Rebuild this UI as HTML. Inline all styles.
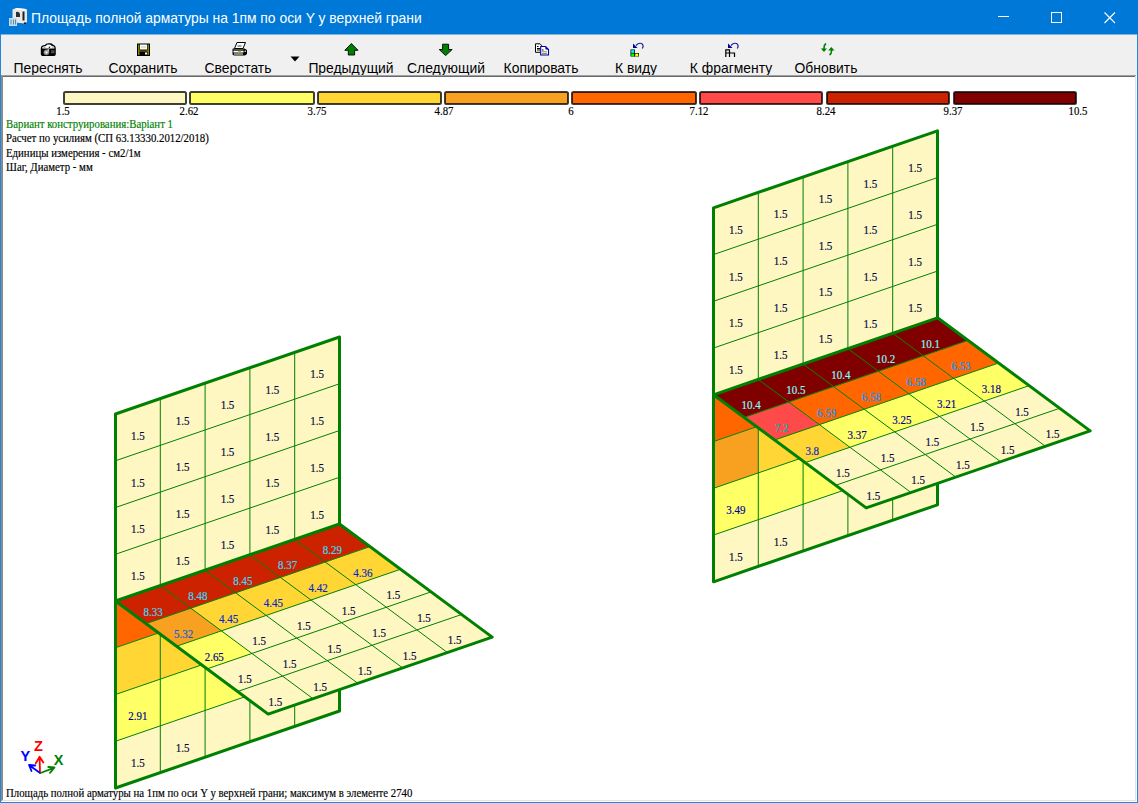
<!DOCTYPE html>
<html><head><meta charset="utf-8"><style>
html,body{margin:0;padding:0;width:1138px;height:803px;overflow:hidden;background:#fff}
body{position:relative;font-family:"Liberation Sans",sans-serif}
#title{position:absolute;left:0;top:0;width:1138px;height:34px;background:#0078D7}
#ttext{position:absolute;left:31px;top:9.5px;color:#fff;font-size:13.88px;white-space:nowrap}
#tb{position:absolute;left:1px;top:34px;width:1136px;height:41px;background:#F0F0F0;border-top:1px solid #80B4E0;box-sizing:border-box}
.lbl{position:absolute;top:24.5px;font-size:13.9px;color:#000;white-space:nowrap}
#client{position:absolute;left:1px;top:75px;width:1136px;height:727px}
#bl{position:absolute;left:0;top:34px;width:1px;height:769px;background:#1E88DF}
#br{position:absolute;left:1137px;top:34px;width:1px;height:769px;background:#1E88DF}
#bb{position:absolute;left:0;top:802px;width:1138px;height:1px;background:#1E88DF}
svg{position:absolute;left:0;top:0}
.serif text{font-family:"Liberation Serif",serif;font-size:10.8px;stroke:currentColor;stroke-width:0.15px}
.serif g.lab text{font-size:11px}
</style></head><body>
<div id="title"><div id="ttext">Площадь полной арматуры на 1пм по оси Y у верхней грани</div></div>
<div id="tb">
<div class="lbl" style="left:47px;transform:translateX(-50%)">Переснять</div>
<div class="lbl" style="left:142px;transform:translateX(-50%)">Сохранить</div>
<div class="lbl" style="left:237px;transform:translateX(-50%)">Сверстать</div>
<div class="lbl" style="left:350px;transform:translateX(-50%)">Предыдущий</div>
<div class="lbl" style="left:445px;transform:translateX(-50%)">Следующий</div>
<div class="lbl" style="left:540px;transform:translateX(-50%)">Копировать</div>
<div class="lbl" style="left:635px;transform:translateX(-50%)">К виду</div>
<div class="lbl" style="left:730px;transform:translateX(-50%)">К фрагменту</div>
<div class="lbl" style="left:825px;transform:translateX(-50%)">Обновить</div><svg width="1136" height="41" style="position:absolute;left:-1px;top:-35px;overflow:visible">
<g transform="translate(0,0)">
<!-- camera -->
<path d="M40.8 48.5 Q40.8 46.2 42.5 45.6 L44.8 45 Q46 43.3 48.3 43.3 L50.5 43.3 Q52 43.4 52.8 44.4 L54.3 45.2 Q55.8 46 55.8 48.5 L55.8 54.2 Q55.8 55.9 54 55.9 L42.6 55.9 Q40.8 55.9 40.8 54.2 Z" fill="#000"/>
<path d="M42.2 48.6 L54.4 48.6 L54.4 47.6 Q54 46.3 52.8 46.1 L51.5 45.7 Q50.8 44.4 49 44.4 L47.5 44.5 Q46.3 45 45.7 46 L43.5 46.5 Q42.2 47 42.2 47.8 Z" fill="#fff"/>
<rect x="48.8" y="46.6" width="1.3" height="1.3" fill="#000"/>
<rect x="43.5" y="46.8" width="2" height="0.9" fill="#808080"/>
<rect x="51.8" y="46.6" width="2" height="0.9" fill="#808080"/>
<circle cx="46.4" cy="52.3" r="2.9" fill="#7a7a7a"/>
<circle cx="46.4" cy="52.3" r="1.9" fill="#b0b0b0"/>
<circle cx="46.4" cy="52.3" r="0.9" fill="#fff"/>
<rect x="47.5" y="49.2" width="1.6" height="2.2" fill="#d0d0d0"/>
<rect x="51" y="50.6" width="3.6" height="0.9" fill="#909090"/>
<rect x="51" y="52.3" width="3.6" height="0.9" fill="#707070"/>
<!-- floppy -->
<rect x="137" y="43.5" width="13" height="12.5" fill="#000"/>
<rect x="138" y="44.5" width="1.5" height="10.5" fill="#808000"/>
<rect x="147.5" y="44.5" width="1.5" height="10.5" fill="#808000"/>
<rect x="138" y="50.5" width="11" height="1" fill="#808000"/>
<rect x="140" y="44.5" width="7" height="5" fill="#fff"/>
<rect x="141" y="46.5" width="5" height="1" fill="#c0c0c0"/>
<rect x="145" y="52.5" width="2" height="2" fill="#fff"/>
<!-- printer -->
<path d="M237 42.5 L245.5 42.5 L243 48.5 L234.5 48.5 Z" fill="#fff" stroke="#000" stroke-width="1"/>
<rect x="237.5" y="45.5" width="4" height="1" fill="#404040"/>
<path d="M233 48.5 L244.5 48.5 L247 50 L247 54 L245 55.5 L234 55.5 L232.5 54.5 L232.5 49 Z" fill="#000"/>
<rect x="233.5" y="49.5" width="10" height="1" fill="#a0a0a0"/>
<rect x="233.5" y="51" width="10" height="1.5" fill="#fff"/>
<rect x="238" y="51" width="3" height="1.5" fill="#c0c000"/>
<rect x="234" y="53" width="9" height="2" fill="#808080"/>
<rect x="244.5" y="50.5" width="1.5" height="1.5" fill="#c0c0c0"/>
<!-- dropdown -->
<path d="M290.5 56.5 L299.5 56.5 L295 61.5 Z" fill="#000"/>
<!-- up arrow -->
<path d="M351.4 43.5 L358 50.3 L354.6 50.3 L354.6 55 L348.3 55 L348.3 50.3 L344.8 50.3 Z" fill="#008000" stroke="#000" stroke-width="0.9" stroke-linejoin="miter"/>
<!-- down arrow -->
<path d="M442.6 44.2 L448.6 44.2 L448.6 49.5 L452.2 49.5 L445.6 55.6 L439.2 49.5 L442.6 49.5 Z" fill="#008000" stroke="#000" stroke-width="0.9"/>
<!-- copy -->
<path d="M535.5 43.8 L540 43.8 L541.5 45.3 L541.5 52.3 L535.5 52.3 Z" fill="#fff" stroke="#000" stroke-width="1"/>
<rect x="537" y="46" width="1.5" height="1" fill="#000"/><rect x="537" y="48" width="3" height="1" fill="#000"/><rect x="537" y="49.5" width="3" height="1" fill="#000"/>
<path d="M540.7 46.5 L545.5 46.5 L548.5 49.5 L548.5 55 L540.7 55 Z" fill="#fff" stroke="#0000A0" stroke-width="1.1"/>
<path d="M545.5 46.5 L548.5 49.5 L545.5 49.5 Z" fill="#0000A0"/>
<rect x="542" y="49.5" width="1.5" height="1" fill="#000"/><rect x="542" y="51.3" width="5" height="1" fill="#909060"/><rect x="542" y="53" width="5" height="1" fill="#909060"/>
<!-- K vidu -->
<path d="M633 43.5 L633 48 L637.5 48 Z" fill="#000090"/>
<path d="M636 45.5 Q638.5 42.5 641.5 43.5 Q643.5 44.5 643 47 L642.3 48.5" fill="none" stroke="#2020A0" stroke-width="1.2"/>
<rect x="630.5" y="49.5" width="4.5" height="7" fill="#000"/>
<rect x="631.2" y="50.2" width="3.1" height="2.6" fill="#00FFFF"/>
<rect x="631.2" y="53.5" width="3.1" height="2.8" fill="#00FF00"/>
<rect x="634.5" y="53" width="4.5" height="3.5" fill="#000"/>
<rect x="635.2" y="53.6" width="3.1" height="2.7" fill="#FFFF00"/>
<!-- K fragmentu -->
<path d="M728 43.5 L728 48 L732.5 48 Z" fill="#000090"/>
<path d="M731 45.5 Q733.5 42.5 736.5 43.5 Q738.5 44.5 738 47 L737.3 48.5" fill="none" stroke="#2020A0" stroke-width="1.2"/>
<path d="M725.8 57 L725.8 49.8 L729.5 49.8 L729.5 57 M725.8 53 L734.5 53 L734.5 57" fill="none" stroke="#000" stroke-width="1.2"/>
<!-- refresh -->
<path d="M826 43.5 Q824 45 824 48 L824 49" fill="none" stroke="#008000" stroke-width="1.6"/>
<path d="M820.8 48.5 L827 48.5 L824 52 Z" fill="#008000"/>
<path d="M829.5 55 Q831.5 53.5 831.5 51 L831.5 50" fill="none" stroke="#008000" stroke-width="1.6"/>
<path d="M828.2 50.5 L834.5 50.5 L831.3 47 Z" fill="#008000"/>
</g>
</svg>
</div>
<svg width="1138" height="803" class="serif">
<rect x="1" y="75" width="1136" height="1" fill="#A0A0A0"/>
<rect x="1" y="76" width="1135" height="1" fill="#696969"/>
<rect x="1" y="75" width="1" height="727" fill="#8E8A86"/>
<rect x="2" y="76" width="1" height="725" fill="#888888"/>
<rect x="1135" y="76" width="1" height="725" fill="#E3E3E3"/>
<rect x="1136" y="75" width="1" height="727" fill="#FFFFFF"/>
<rect x="2" y="800" width="1134" height="1" fill="#E3E3E3"/>
<rect x="1" y="801" width="1136" height="1" fill="#FFFFFF"/>
<rect x="64" y="92" width="122" height="12" rx="1.5" fill="#FFF7C2" stroke="#000" stroke-opacity="0.75" stroke-width="2"/>
<rect x="190" y="92" width="124" height="12" rx="1.5" fill="#FFFF66" stroke="#000" stroke-opacity="0.75" stroke-width="2"/>
<rect x="318" y="92" width="123" height="12" rx="1.5" fill="#FFD633" stroke="#000" stroke-opacity="0.75" stroke-width="2"/>
<rect x="445" y="92" width="123" height="12" rx="1.5" fill="#F8A020" stroke="#000" stroke-opacity="0.75" stroke-width="2"/>
<rect x="572" y="92" width="124" height="12" rx="1.5" fill="#FF6600" stroke="#000" stroke-opacity="0.75" stroke-width="2"/>
<rect x="700" y="92" width="122" height="12" rx="1.5" fill="#FF4A4A" stroke="#000" stroke-opacity="0.75" stroke-width="2"/>
<rect x="827" y="92" width="122" height="12" rx="1.5" fill="#CC2200" stroke="#000" stroke-opacity="0.75" stroke-width="2"/>
<rect x="954" y="92" width="122" height="12" rx="1.5" fill="#800000" stroke="#000" stroke-opacity="0.75" stroke-width="2"/>
<text transform="translate(63 115.2) scale(1 1.14)" text-anchor="middle">1.5</text>
<text transform="translate(189 115.2) scale(1 1.14)" text-anchor="middle">2.62</text>
<text transform="translate(317 115.2) scale(1 1.14)" text-anchor="middle">3.75</text>
<text transform="translate(444 115.2) scale(1 1.14)" text-anchor="middle">4.87</text>
<text transform="translate(571 115.2) scale(1 1.14)" text-anchor="middle">6</text>
<text transform="translate(699 115.2) scale(1 1.14)" text-anchor="middle">7.12</text>
<text transform="translate(826 115.2) scale(1 1.14)" text-anchor="middle">8.24</text>
<text transform="translate(953 115.2) scale(1 1.14)" text-anchor="middle">9.37</text>
<text transform="translate(1078 115.2) scale(1 1.14)" text-anchor="middle">10.5</text>
<text transform="translate(6 128) scale(1 1.14)" fill="#008000" color="#008000">Вариант конструирования:Варіант 1</text>
<text transform="translate(6 142.3) scale(1 1.14)">Расчет по усилиям (СП 63.13330.2012/2018)</text>
<text transform="translate(6 156.8) scale(1 1.14)">Единицы измерения - см2/1м</text>
<text transform="translate(6 171.2) scale(1 1.14)">Шаг, Диаметр - мм</text>
<g text-anchor="middle" class="lab">
<polygon points="115.5,414 160.3,398.6 160.3,445.35 115.5,460.75" fill="#FFF7C2"/>
<polygon points="160.3,398.6 205.1,383.2 205.1,429.95 160.3,445.35" fill="#FFF7C2"/>
<polygon points="205.1,383.2 249.9,367.8 249.9,414.55 205.1,429.95" fill="#FFF7C2"/>
<polygon points="249.9,367.8 294.7,352.4 294.7,399.15 249.9,414.55" fill="#FFF7C2"/>
<polygon points="294.7,352.4 339.5,337 339.5,383.75 294.7,399.15" fill="#FFF7C2"/>
<polygon points="115.5,460.75 160.3,445.35 160.3,492.1 115.5,507.5" fill="#FFF7C2"/>
<polygon points="160.3,445.35 205.1,429.95 205.1,476.7 160.3,492.1" fill="#FFF7C2"/>
<polygon points="205.1,429.95 249.9,414.55 249.9,461.3 205.1,476.7" fill="#FFF7C2"/>
<polygon points="249.9,414.55 294.7,399.15 294.7,445.9 249.9,461.3" fill="#FFF7C2"/>
<polygon points="294.7,399.15 339.5,383.75 339.5,430.5 294.7,445.9" fill="#FFF7C2"/>
<polygon points="115.5,507.5 160.3,492.1 160.3,538.85 115.5,554.25" fill="#FFF7C2"/>
<polygon points="160.3,492.1 205.1,476.7 205.1,523.45 160.3,538.85" fill="#FFF7C2"/>
<polygon points="205.1,476.7 249.9,461.3 249.9,508.05 205.1,523.45" fill="#FFF7C2"/>
<polygon points="249.9,461.3 294.7,445.9 294.7,492.65 249.9,508.05" fill="#FFF7C2"/>
<polygon points="294.7,445.9 339.5,430.5 339.5,477.25 294.7,492.65" fill="#FFF7C2"/>
<polygon points="115.5,554.25 160.3,538.85 160.3,585.6 115.5,601" fill="#FFF7C2"/>
<polygon points="160.3,538.85 205.1,523.45 205.1,570.2 160.3,585.6" fill="#FFF7C2"/>
<polygon points="205.1,523.45 249.9,508.05 249.9,554.8 205.1,570.2" fill="#FFF7C2"/>
<polygon points="249.9,508.05 294.7,492.65 294.7,539.4 249.9,554.8" fill="#FFF7C2"/>
<polygon points="294.7,492.65 339.5,477.25 339.5,524 294.7,539.4" fill="#FFF7C2"/>
<polygon points="115.5,601 160.3,585.6 160.3,632.35 115.5,647.75" fill="#FF6600"/>
<polygon points="160.3,585.6 205.1,570.2 205.1,616.95 160.3,632.35" fill="#FF6600"/>
<polygon points="205.1,570.2 249.9,554.8 249.9,601.55 205.1,616.95" fill="#FF6600"/>
<polygon points="249.9,554.8 294.7,539.4 294.7,586.15 249.9,601.55" fill="#FF6600"/>
<polygon points="294.7,539.4 339.5,524 339.5,570.75 294.7,586.15" fill="#FF6600"/>
<polygon points="115.5,647.75 160.3,632.35 160.3,679.1 115.5,694.5" fill="#FFD633"/>
<polygon points="160.3,632.35 205.1,616.95 205.1,663.7 160.3,679.1" fill="#FFD633"/>
<polygon points="205.1,616.95 249.9,601.55 249.9,648.3 205.1,663.7" fill="#FFD633"/>
<polygon points="249.9,601.55 294.7,586.15 294.7,632.9 249.9,648.3" fill="#FFD633"/>
<polygon points="294.7,586.15 339.5,570.75 339.5,617.5 294.7,632.9" fill="#FFD633"/>
<polygon points="115.5,694.5 160.3,679.1 160.3,725.85 115.5,741.25" fill="#FFFF66"/>
<polygon points="160.3,679.1 205.1,663.7 205.1,710.45 160.3,725.85" fill="#FFFF66"/>
<polygon points="205.1,663.7 249.9,648.3 249.9,695.05 205.1,710.45" fill="#FFFF66"/>
<polygon points="249.9,648.3 294.7,632.9 294.7,679.65 249.9,695.05" fill="#FFFF66"/>
<polygon points="294.7,632.9 339.5,617.5 339.5,664.25 294.7,679.65" fill="#FFFF66"/>
<polygon points="115.5,741.25 160.3,725.85 160.3,772.6 115.5,788" fill="#FFF7C2"/>
<polygon points="160.3,725.85 205.1,710.45 205.1,757.2 160.3,772.6" fill="#FFF7C2"/>
<polygon points="205.1,710.45 249.9,695.05 249.9,741.8 205.1,757.2" fill="#FFF7C2"/>
<polygon points="249.9,695.05 294.7,679.65 294.7,726.4 249.9,741.8" fill="#FFF7C2"/>
<polygon points="294.7,679.65 339.5,664.25 339.5,711 294.7,726.4" fill="#FFF7C2"/>
<line x1="160.3" y1="398.6" x2="160.3" y2="772.6" stroke="#008000" stroke-width="1"/>
<line x1="205.1" y1="383.2" x2="205.1" y2="757.2" stroke="#008000" stroke-width="1"/>
<line x1="249.9" y1="367.8" x2="249.9" y2="741.8" stroke="#008000" stroke-width="1"/>
<line x1="294.7" y1="352.4" x2="294.7" y2="726.4" stroke="#008000" stroke-width="1"/>
<line x1="115.5" y1="460.75" x2="339.5" y2="383.75" stroke="#008000" stroke-width="1"/>
<line x1="115.5" y1="507.5" x2="339.5" y2="430.5" stroke="#008000" stroke-width="1"/>
<line x1="115.5" y1="554.25" x2="339.5" y2="477.25" stroke="#008000" stroke-width="1"/>
<line x1="115.5" y1="601" x2="339.5" y2="524" stroke="#008000" stroke-width="1"/>
<line x1="115.5" y1="647.75" x2="339.5" y2="570.75" stroke="#008000" stroke-width="1"/>
<line x1="115.5" y1="694.5" x2="339.5" y2="617.5" stroke="#008000" stroke-width="1"/>
<line x1="115.5" y1="741.25" x2="339.5" y2="664.25" stroke="#008000" stroke-width="1"/>
<text transform="translate(137.9 439.98) scale(1 1.2)" fill="#00083D" color="#00083D">1.5</text>
<text transform="translate(182.7 424.57) scale(1 1.2)" fill="#00083D" color="#00083D">1.5</text>
<text transform="translate(227.5 409.18) scale(1 1.2)" fill="#00083D" color="#00083D">1.5</text>
<text transform="translate(272.3 393.78) scale(1 1.2)" fill="#00083D" color="#00083D">1.5</text>
<text transform="translate(317.1 378.38) scale(1 1.2)" fill="#00083D" color="#00083D">1.5</text>
<text transform="translate(137.9 486.73) scale(1 1.2)" fill="#00083D" color="#00083D">1.5</text>
<text transform="translate(182.7 471.32) scale(1 1.2)" fill="#00083D" color="#00083D">1.5</text>
<text transform="translate(227.5 455.93) scale(1 1.2)" fill="#00083D" color="#00083D">1.5</text>
<text transform="translate(272.3 440.53) scale(1 1.2)" fill="#00083D" color="#00083D">1.5</text>
<text transform="translate(317.1 425.12) scale(1 1.2)" fill="#00083D" color="#00083D">1.5</text>
<text transform="translate(137.9 533.47) scale(1 1.2)" fill="#00083D" color="#00083D">1.5</text>
<text transform="translate(182.7 518.07) scale(1 1.2)" fill="#00083D" color="#00083D">1.5</text>
<text transform="translate(227.5 502.68) scale(1 1.2)" fill="#00083D" color="#00083D">1.5</text>
<text transform="translate(272.3 487.28) scale(1 1.2)" fill="#00083D" color="#00083D">1.5</text>
<text transform="translate(317.1 471.88) scale(1 1.2)" fill="#00083D" color="#00083D">1.5</text>
<text transform="translate(137.9 580.22) scale(1 1.2)" fill="#00083D" color="#00083D">1.5</text>
<text transform="translate(182.7 564.82) scale(1 1.2)" fill="#00083D" color="#00083D">1.5</text>
<text transform="translate(227.5 549.42) scale(1 1.2)" fill="#00083D" color="#00083D">1.5</text>
<text transform="translate(272.3 534.02) scale(1 1.2)" fill="#00083D" color="#00083D">1.5</text>
<text transform="translate(317.1 518.62) scale(1 1.2)" fill="#00083D" color="#00083D">1.5</text>
<text transform="translate(137.9 720.47) scale(1 1.2)" fill="#000099" color="#000099">2.91</text>
<text transform="translate(137.9 767.22) scale(1 1.2)" fill="#00083D" color="#00083D">1.5</text>
<text transform="translate(182.7 751.82) scale(1 1.2)" fill="#00083D" color="#00083D">1.5</text>
<polygon points="115.5,414 339.5,337 339.5,711 115.5,788" fill="none" stroke="#008000" stroke-width="3" stroke-linejoin="round"/>
<polygon points="115.5,601 160.3,585.6 190.84,608.22 146.04,623.62" fill="#CC2200"/>
<polygon points="160.3,585.6 205.1,570.2 235.64,592.82 190.84,608.22" fill="#CC2200"/>
<polygon points="205.1,570.2 249.9,554.8 280.44,577.42 235.64,592.82" fill="#CC2200"/>
<polygon points="249.9,554.8 294.7,539.4 325.24,562.02 280.44,577.42" fill="#CC2200"/>
<polygon points="294.7,539.4 339.5,524 370.04,546.62 325.24,562.02" fill="#CC2200"/>
<polygon points="146.04,623.62 190.84,608.22 221.38,630.84 176.58,646.24" fill="#F8A020"/>
<polygon points="190.84,608.22 235.64,592.82 266.18,615.44 221.38,630.84" fill="#FFD633"/>
<polygon points="235.64,592.82 280.44,577.42 310.98,600.04 266.18,615.44" fill="#FFD633"/>
<polygon points="280.44,577.42 325.24,562.02 355.78,584.64 310.98,600.04" fill="#FFD633"/>
<polygon points="325.24,562.02 370.04,546.62 400.58,569.24 355.78,584.64" fill="#FFD633"/>
<polygon points="176.58,646.24 221.38,630.84 251.92,653.46 207.12,668.86" fill="#FFFF66"/>
<polygon points="221.38,630.84 266.18,615.44 296.72,638.06 251.92,653.46" fill="#FFF7C2"/>
<polygon points="266.18,615.44 310.98,600.04 341.52,622.66 296.72,638.06" fill="#FFF7C2"/>
<polygon points="310.98,600.04 355.78,584.64 386.32,607.26 341.52,622.66" fill="#FFF7C2"/>
<polygon points="355.78,584.64 400.58,569.24 431.12,591.86 386.32,607.26" fill="#FFF7C2"/>
<polygon points="207.12,668.86 251.92,653.46 282.46,676.08 237.66,691.48" fill="#FFF7C2"/>
<polygon points="251.92,653.46 296.72,638.06 327.26,660.68 282.46,676.08" fill="#FFF7C2"/>
<polygon points="296.72,638.06 341.52,622.66 372.06,645.28 327.26,660.68" fill="#FFF7C2"/>
<polygon points="341.52,622.66 386.32,607.26 416.86,629.88 372.06,645.28" fill="#FFF7C2"/>
<polygon points="386.32,607.26 431.12,591.86 461.66,614.48 416.86,629.88" fill="#FFF7C2"/>
<polygon points="237.66,691.48 282.46,676.08 313,698.7 268.2,714.1" fill="#FFF7C2"/>
<polygon points="282.46,676.08 327.26,660.68 357.8,683.3 313,698.7" fill="#FFF7C2"/>
<polygon points="327.26,660.68 372.06,645.28 402.6,667.9 357.8,683.3" fill="#FFF7C2"/>
<polygon points="372.06,645.28 416.86,629.88 447.4,652.5 402.6,667.9" fill="#FFF7C2"/>
<polygon points="416.86,629.88 461.66,614.48 492.2,637.1 447.4,652.5" fill="#FFF7C2"/>
<line x1="160.3" y1="585.6" x2="313" y2="698.7" stroke="#008000" stroke-width="1"/>
<line x1="205.1" y1="570.2" x2="357.8" y2="683.3" stroke="#008000" stroke-width="1"/>
<line x1="249.9" y1="554.8" x2="402.6" y2="667.9" stroke="#008000" stroke-width="1"/>
<line x1="294.7" y1="539.4" x2="447.4" y2="652.5" stroke="#008000" stroke-width="1"/>
<line x1="146.04" y1="623.62" x2="370.04" y2="546.62" stroke="#008000" stroke-width="1"/>
<line x1="176.58" y1="646.24" x2="400.58" y2="569.24" stroke="#008000" stroke-width="1"/>
<line x1="207.12" y1="668.86" x2="431.12" y2="591.86" stroke="#008000" stroke-width="1"/>
<line x1="237.66" y1="691.48" x2="461.66" y2="614.48" stroke="#008000" stroke-width="1"/>
<text transform="translate(153.17 615.61) scale(1 1.2)" fill="#33DDFF" color="#33DDFF">8.33</text>
<text transform="translate(197.97 600.21) scale(1 1.2)" fill="#33DDFF" color="#33DDFF">8.48</text>
<text transform="translate(242.77 584.81) scale(1 1.2)" fill="#33DDFF" color="#33DDFF">8.45</text>
<text transform="translate(287.57 569.41) scale(1 1.2)" fill="#33DDFF" color="#33DDFF">8.37</text>
<text transform="translate(332.37 554.01) scale(1 1.2)" fill="#33DDFF" color="#33DDFF">8.29</text>
<text transform="translate(183.71 638.23) scale(1 1.2)" fill="#075FDF" color="#075FDF">5.32</text>
<text transform="translate(228.51 622.83) scale(1 1.2)" fill="#0029CC" color="#0029CC">4.45</text>
<text transform="translate(273.31 607.43) scale(1 1.2)" fill="#0029CC" color="#0029CC">4.45</text>
<text transform="translate(318.11 592.03) scale(1 1.2)" fill="#0029CC" color="#0029CC">4.42</text>
<text transform="translate(362.91 576.63) scale(1 1.2)" fill="#0029CC" color="#0029CC">4.36</text>
<text transform="translate(214.25 660.85) scale(1 1.2)" fill="#000099" color="#000099">2.65</text>
<text transform="translate(259.05 645.45) scale(1 1.2)" fill="#00083D" color="#00083D">1.5</text>
<text transform="translate(303.85 630.05) scale(1 1.2)" fill="#00083D" color="#00083D">1.5</text>
<text transform="translate(348.65 614.65) scale(1 1.2)" fill="#00083D" color="#00083D">1.5</text>
<text transform="translate(393.45 599.25) scale(1 1.2)" fill="#00083D" color="#00083D">1.5</text>
<text transform="translate(244.79 683.47) scale(1 1.2)" fill="#00083D" color="#00083D">1.5</text>
<text transform="translate(289.59 668.07) scale(1 1.2)" fill="#00083D" color="#00083D">1.5</text>
<text transform="translate(334.39 652.67) scale(1 1.2)" fill="#00083D" color="#00083D">1.5</text>
<text transform="translate(379.19 637.27) scale(1 1.2)" fill="#00083D" color="#00083D">1.5</text>
<text transform="translate(423.99 621.87) scale(1 1.2)" fill="#00083D" color="#00083D">1.5</text>
<text transform="translate(275.33 706.09) scale(1 1.2)" fill="#00083D" color="#00083D">1.5</text>
<text transform="translate(320.13 690.69) scale(1 1.2)" fill="#00083D" color="#00083D">1.5</text>
<text transform="translate(364.93 675.29) scale(1 1.2)" fill="#00083D" color="#00083D">1.5</text>
<text transform="translate(409.73 659.89) scale(1 1.2)" fill="#00083D" color="#00083D">1.5</text>
<text transform="translate(454.53 644.49) scale(1 1.2)" fill="#00083D" color="#00083D">1.5</text>
<polygon points="115.5,601 339.5,524 492.2,637.1 268.2,714.1" fill="none" stroke="#008000" stroke-width="3" stroke-linejoin="round"/>
<polygon points="713.5,207.8 758.3,192.4 758.3,239.15 713.5,254.55" fill="#FFF7C2"/>
<polygon points="758.3,192.4 803.1,177 803.1,223.75 758.3,239.15" fill="#FFF7C2"/>
<polygon points="803.1,177 847.9,161.6 847.9,208.35 803.1,223.75" fill="#FFF7C2"/>
<polygon points="847.9,161.6 892.7,146.2 892.7,192.95 847.9,208.35" fill="#FFF7C2"/>
<polygon points="892.7,146.2 937.5,130.8 937.5,177.55 892.7,192.95" fill="#FFF7C2"/>
<polygon points="713.5,254.55 758.3,239.15 758.3,285.9 713.5,301.3" fill="#FFF7C2"/>
<polygon points="758.3,239.15 803.1,223.75 803.1,270.5 758.3,285.9" fill="#FFF7C2"/>
<polygon points="803.1,223.75 847.9,208.35 847.9,255.1 803.1,270.5" fill="#FFF7C2"/>
<polygon points="847.9,208.35 892.7,192.95 892.7,239.7 847.9,255.1" fill="#FFF7C2"/>
<polygon points="892.7,192.95 937.5,177.55 937.5,224.3 892.7,239.7" fill="#FFF7C2"/>
<polygon points="713.5,301.3 758.3,285.9 758.3,332.65 713.5,348.05" fill="#FFF7C2"/>
<polygon points="758.3,285.9 803.1,270.5 803.1,317.25 758.3,332.65" fill="#FFF7C2"/>
<polygon points="803.1,270.5 847.9,255.1 847.9,301.85 803.1,317.25" fill="#FFF7C2"/>
<polygon points="847.9,255.1 892.7,239.7 892.7,286.45 847.9,301.85" fill="#FFF7C2"/>
<polygon points="892.7,239.7 937.5,224.3 937.5,271.05 892.7,286.45" fill="#FFF7C2"/>
<polygon points="713.5,348.05 758.3,332.65 758.3,379.4 713.5,394.8" fill="#FFF7C2"/>
<polygon points="758.3,332.65 803.1,317.25 803.1,364 758.3,379.4" fill="#FFF7C2"/>
<polygon points="803.1,317.25 847.9,301.85 847.9,348.6 803.1,364" fill="#FFF7C2"/>
<polygon points="847.9,301.85 892.7,286.45 892.7,333.2 847.9,348.6" fill="#FFF7C2"/>
<polygon points="892.7,286.45 937.5,271.05 937.5,317.8 892.7,333.2" fill="#FFF7C2"/>
<polygon points="713.5,394.8 758.3,379.4 758.3,426.15 713.5,441.55" fill="#FF6600"/>
<polygon points="758.3,379.4 803.1,364 803.1,410.75 758.3,426.15" fill="#FF6600"/>
<polygon points="803.1,364 847.9,348.6 847.9,395.35 803.1,410.75" fill="#FF6600"/>
<polygon points="847.9,348.6 892.7,333.2 892.7,379.95 847.9,395.35" fill="#FF6600"/>
<polygon points="892.7,333.2 937.5,317.8 937.5,364.55 892.7,379.95" fill="#FF6600"/>
<polygon points="713.5,441.55 758.3,426.15 758.3,472.9 713.5,488.3" fill="#F8A020"/>
<polygon points="758.3,426.15 803.1,410.75 803.1,457.5 758.3,472.9" fill="#FFD633"/>
<polygon points="803.1,410.75 847.9,395.35 847.9,442.1 803.1,457.5" fill="#FFD633"/>
<polygon points="847.9,395.35 892.7,379.95 892.7,426.7 847.9,442.1" fill="#FFD633"/>
<polygon points="892.7,379.95 937.5,364.55 937.5,411.3 892.7,426.7" fill="#FFD633"/>
<polygon points="713.5,488.3 758.3,472.9 758.3,519.65 713.5,535.05" fill="#FFFF66"/>
<polygon points="758.3,472.9 803.1,457.5 803.1,504.25 758.3,519.65" fill="#FFFF66"/>
<polygon points="803.1,457.5 847.9,442.1 847.9,488.85 803.1,504.25" fill="#FFFF66"/>
<polygon points="847.9,442.1 892.7,426.7 892.7,473.45 847.9,488.85" fill="#FFFF66"/>
<polygon points="892.7,426.7 937.5,411.3 937.5,458.05 892.7,473.45" fill="#FFFF66"/>
<polygon points="713.5,535.05 758.3,519.65 758.3,566.4 713.5,581.8" fill="#FFF7C2"/>
<polygon points="758.3,519.65 803.1,504.25 803.1,551 758.3,566.4" fill="#FFF7C2"/>
<polygon points="803.1,504.25 847.9,488.85 847.9,535.6 803.1,551" fill="#FFF7C2"/>
<polygon points="847.9,488.85 892.7,473.45 892.7,520.2 847.9,535.6" fill="#FFF7C2"/>
<polygon points="892.7,473.45 937.5,458.05 937.5,504.8 892.7,520.2" fill="#FFF7C2"/>
<line x1="758.3" y1="192.4" x2="758.3" y2="566.4" stroke="#008000" stroke-width="1"/>
<line x1="803.1" y1="177" x2="803.1" y2="551" stroke="#008000" stroke-width="1"/>
<line x1="847.9" y1="161.6" x2="847.9" y2="535.6" stroke="#008000" stroke-width="1"/>
<line x1="892.7" y1="146.2" x2="892.7" y2="520.2" stroke="#008000" stroke-width="1"/>
<line x1="713.5" y1="254.55" x2="937.5" y2="177.55" stroke="#008000" stroke-width="1"/>
<line x1="713.5" y1="301.3" x2="937.5" y2="224.3" stroke="#008000" stroke-width="1"/>
<line x1="713.5" y1="348.05" x2="937.5" y2="271.05" stroke="#008000" stroke-width="1"/>
<line x1="713.5" y1="394.8" x2="937.5" y2="317.8" stroke="#008000" stroke-width="1"/>
<line x1="713.5" y1="441.55" x2="937.5" y2="364.55" stroke="#008000" stroke-width="1"/>
<line x1="713.5" y1="488.3" x2="937.5" y2="411.3" stroke="#008000" stroke-width="1"/>
<line x1="713.5" y1="535.05" x2="937.5" y2="458.05" stroke="#008000" stroke-width="1"/>
<text transform="translate(735.9 233.78) scale(1 1.2)" fill="#00083D" color="#00083D">1.5</text>
<text transform="translate(780.7 218.38) scale(1 1.2)" fill="#00083D" color="#00083D">1.5</text>
<text transform="translate(825.5 202.98) scale(1 1.2)" fill="#00083D" color="#00083D">1.5</text>
<text transform="translate(870.3 187.58) scale(1 1.2)" fill="#00083D" color="#00083D">1.5</text>
<text transform="translate(915.1 172.18) scale(1 1.2)" fill="#00083D" color="#00083D">1.5</text>
<text transform="translate(735.9 280.53) scale(1 1.2)" fill="#00083D" color="#00083D">1.5</text>
<text transform="translate(780.7 265.12) scale(1 1.2)" fill="#00083D" color="#00083D">1.5</text>
<text transform="translate(825.5 249.73) scale(1 1.2)" fill="#00083D" color="#00083D">1.5</text>
<text transform="translate(870.3 234.33) scale(1 1.2)" fill="#00083D" color="#00083D">1.5</text>
<text transform="translate(915.1 218.93) scale(1 1.2)" fill="#00083D" color="#00083D">1.5</text>
<text transform="translate(735.9 327.28) scale(1 1.2)" fill="#00083D" color="#00083D">1.5</text>
<text transform="translate(780.7 311.88) scale(1 1.2)" fill="#00083D" color="#00083D">1.5</text>
<text transform="translate(825.5 296.48) scale(1 1.2)" fill="#00083D" color="#00083D">1.5</text>
<text transform="translate(870.3 281.07) scale(1 1.2)" fill="#00083D" color="#00083D">1.5</text>
<text transform="translate(915.1 265.68) scale(1 1.2)" fill="#00083D" color="#00083D">1.5</text>
<text transform="translate(735.9 374.03) scale(1 1.2)" fill="#00083D" color="#00083D">1.5</text>
<text transform="translate(780.7 358.63) scale(1 1.2)" fill="#00083D" color="#00083D">1.5</text>
<text transform="translate(825.5 343.23) scale(1 1.2)" fill="#00083D" color="#00083D">1.5</text>
<text transform="translate(870.3 327.82) scale(1 1.2)" fill="#00083D" color="#00083D">1.5</text>
<text transform="translate(915.1 312.43) scale(1 1.2)" fill="#00083D" color="#00083D">1.5</text>
<text transform="translate(735.9 514.27) scale(1 1.2)" fill="#000099" color="#000099">3.49</text>
<text transform="translate(735.9 561.02) scale(1 1.2)" fill="#00083D" color="#00083D">1.5</text>
<text transform="translate(780.7 545.62) scale(1 1.2)" fill="#00083D" color="#00083D">1.5</text>
<polygon points="713.5,207.8 937.5,130.8 937.5,504.8 713.5,581.8" fill="none" stroke="#008000" stroke-width="3" stroke-linejoin="round"/>
<polygon points="713.5,394.8 758.3,379.4 788.84,402.02 744.04,417.42" fill="#800000"/>
<polygon points="758.3,379.4 803.1,364 833.64,386.62 788.84,402.02" fill="#800000"/>
<polygon points="803.1,364 847.9,348.6 878.44,371.22 833.64,386.62" fill="#800000"/>
<polygon points="847.9,348.6 892.7,333.2 923.24,355.82 878.44,371.22" fill="#800000"/>
<polygon points="892.7,333.2 937.5,317.8 968.04,340.42 923.24,355.82" fill="#800000"/>
<polygon points="744.04,417.42 788.84,402.02 819.38,424.64 774.58,440.04" fill="#FF4A4A"/>
<polygon points="788.84,402.02 833.64,386.62 864.18,409.24 819.38,424.64" fill="#FF6600"/>
<polygon points="833.64,386.62 878.44,371.22 908.98,393.84 864.18,409.24" fill="#FF6600"/>
<polygon points="878.44,371.22 923.24,355.82 953.78,378.44 908.98,393.84" fill="#FF6600"/>
<polygon points="923.24,355.82 968.04,340.42 998.58,363.04 953.78,378.44" fill="#FF6600"/>
<polygon points="774.58,440.04 819.38,424.64 849.92,447.26 805.12,462.66" fill="#FFD633"/>
<polygon points="819.38,424.64 864.18,409.24 894.72,431.86 849.92,447.26" fill="#FFFF66"/>
<polygon points="864.18,409.24 908.98,393.84 939.52,416.46 894.72,431.86" fill="#FFFF66"/>
<polygon points="908.98,393.84 953.78,378.44 984.32,401.06 939.52,416.46" fill="#FFFF66"/>
<polygon points="953.78,378.44 998.58,363.04 1029.12,385.66 984.32,401.06" fill="#FFFF66"/>
<polygon points="805.12,462.66 849.92,447.26 880.46,469.88 835.66,485.28" fill="#FFF7C2"/>
<polygon points="849.92,447.26 894.72,431.86 925.26,454.48 880.46,469.88" fill="#FFF7C2"/>
<polygon points="894.72,431.86 939.52,416.46 970.06,439.08 925.26,454.48" fill="#FFF7C2"/>
<polygon points="939.52,416.46 984.32,401.06 1014.86,423.68 970.06,439.08" fill="#FFF7C2"/>
<polygon points="984.32,401.06 1029.12,385.66 1059.66,408.28 1014.86,423.68" fill="#FFF7C2"/>
<polygon points="835.66,485.28 880.46,469.88 911,492.5 866.2,507.9" fill="#FFF7C2"/>
<polygon points="880.46,469.88 925.26,454.48 955.8,477.1 911,492.5" fill="#FFF7C2"/>
<polygon points="925.26,454.48 970.06,439.08 1000.6,461.7 955.8,477.1" fill="#FFF7C2"/>
<polygon points="970.06,439.08 1014.86,423.68 1045.4,446.3 1000.6,461.7" fill="#FFF7C2"/>
<polygon points="1014.86,423.68 1059.66,408.28 1090.2,430.9 1045.4,446.3" fill="#FFF7C2"/>
<line x1="758.3" y1="379.4" x2="911" y2="492.5" stroke="#008000" stroke-width="1"/>
<line x1="803.1" y1="364" x2="955.8" y2="477.1" stroke="#008000" stroke-width="1"/>
<line x1="847.9" y1="348.6" x2="1000.6" y2="461.7" stroke="#008000" stroke-width="1"/>
<line x1="892.7" y1="333.2" x2="1045.4" y2="446.3" stroke="#008000" stroke-width="1"/>
<line x1="744.04" y1="417.42" x2="968.04" y2="340.42" stroke="#008000" stroke-width="1"/>
<line x1="774.58" y1="440.04" x2="998.58" y2="363.04" stroke="#008000" stroke-width="1"/>
<line x1="805.12" y1="462.66" x2="1029.12" y2="385.66" stroke="#008000" stroke-width="1"/>
<line x1="835.66" y1="485.28" x2="1059.66" y2="408.28" stroke="#008000" stroke-width="1"/>
<text transform="translate(751.17 409.41) scale(1 1.2)" fill="#7FFFFF" color="#7FFFFF">10.4</text>
<text transform="translate(795.97 394.01) scale(1 1.2)" fill="#7FFFFF" color="#7FFFFF">10.5</text>
<text transform="translate(840.77 378.61) scale(1 1.2)" fill="#7FFFFF" color="#7FFFFF">10.4</text>
<text transform="translate(885.57 363.21) scale(1 1.2)" fill="#7FFFFF" color="#7FFFFF">10.2</text>
<text transform="translate(930.37 347.81) scale(1 1.2)" fill="#7FFFFF" color="#7FFFFF">10.1</text>
<text transform="translate(781.71 432.03) scale(1 1.2)" fill="#00B5B5" color="#00B5B5">7.2</text>
<text transform="translate(826.51 416.63) scale(1 1.2)" fill="#0099FF" color="#0099FF">6.59</text>
<text transform="translate(871.31 401.23) scale(1 1.2)" fill="#0099FF" color="#0099FF">6.58</text>
<text transform="translate(916.11 385.83) scale(1 1.2)" fill="#0099FF" color="#0099FF">6.58</text>
<text transform="translate(960.91 370.43) scale(1 1.2)" fill="#0099FF" color="#0099FF">6.53</text>
<text transform="translate(812.25 454.65) scale(1 1.2)" fill="#0029CC" color="#0029CC">3.8</text>
<text transform="translate(857.05 439.25) scale(1 1.2)" fill="#000099" color="#000099">3.37</text>
<text transform="translate(901.85 423.85) scale(1 1.2)" fill="#000099" color="#000099">3.25</text>
<text transform="translate(946.65 408.45) scale(1 1.2)" fill="#000099" color="#000099">3.21</text>
<text transform="translate(991.45 393.05) scale(1 1.2)" fill="#000099" color="#000099">3.18</text>
<text transform="translate(842.79 477.27) scale(1 1.2)" fill="#00083D" color="#00083D">1.5</text>
<text transform="translate(887.59 461.87) scale(1 1.2)" fill="#00083D" color="#00083D">1.5</text>
<text transform="translate(932.39 446.47) scale(1 1.2)" fill="#00083D" color="#00083D">1.5</text>
<text transform="translate(977.19 431.07) scale(1 1.2)" fill="#00083D" color="#00083D">1.5</text>
<text transform="translate(1021.99 415.67) scale(1 1.2)" fill="#00083D" color="#00083D">1.5</text>
<text transform="translate(873.33 499.89) scale(1 1.2)" fill="#00083D" color="#00083D">1.5</text>
<text transform="translate(918.13 484.49) scale(1 1.2)" fill="#00083D" color="#00083D">1.5</text>
<text transform="translate(962.93 469.09) scale(1 1.2)" fill="#00083D" color="#00083D">1.5</text>
<text transform="translate(1007.73 453.69) scale(1 1.2)" fill="#00083D" color="#00083D">1.5</text>
<text transform="translate(1052.53 438.29) scale(1 1.2)" fill="#00083D" color="#00083D">1.5</text>
<polygon points="713.5,394.8 937.5,317.8 1090.2,430.9 866.2,507.9" fill="none" stroke="#008000" stroke-width="3" stroke-linejoin="round"/>
</g>
<text transform="translate(6 796.5) scale(1 1.14)">Площадь полной арматуры на 1пм по оси Y у верхней грани; максимум в элементе 2740</text>
<g style="font-family:'Liberation Sans',sans-serif;font-weight:bold;font-size:14.5px">
<text style="font-family:'Liberation Sans',sans-serif;font-size:14.5px;font-weight:bold;stroke:none" x="34" y="751" fill="#FF0000">Z</text>
<text style="font-family:'Liberation Sans',sans-serif;font-size:14.5px;font-weight:bold;stroke:none" x="20.5" y="761.2" fill="#0000FF">Y</text>
<text style="font-family:'Liberation Sans',sans-serif;font-size:14.5px;font-weight:bold;stroke:none" x="53.7" y="765" fill="#008000">X</text>
</g>
<g fill="none" stroke-width="1.8" stroke-linecap="round" stroke-linejoin="round">
<path d="M40 773 L39.6 757.5 M35.8 763.2 L39.6 756.8 L43.3 762.6" stroke="#FF0000"/>
<path d="M39.5 772.5 L29.5 765.5 M35.3 765.5 L29 765 L31.5 771" stroke="#0000FF"/>
<path d="M40.5 773 L54 767.8 M48.3 767 L54.5 767.5 L50 772.8" stroke="#008000"/>
</g>
</svg>
<div id="bl"></div><div id="br"></div><div id="bb"></div>
<svg width="1138" height="34" style="position:absolute;left:0;top:0">
<rect x="998" y="16" width="11" height="1" fill="#fff"/>
<path d="M12.5 9.5 L16 8 L26 9 L27 10.5 L27 22 L25.5 23.5 L14 22.5 L12.5 21 Z" fill="#E8E8E8"/>
<path d="M16 8 L26 9 L27 10.5 L17 9.8 Z" fill="#FFFFFF"/>
<rect x="22.5" y="11.5" width="2" height="9" fill="#202020"/>
<path d="M16 12 Q19 11 20 14 L20 17 L16 17 Z" fill="#303030"/>
<rect x="14" y="21.8" width="2" height="1.5" fill="#101010"/><rect x="24" y="22.5" width="2" height="1.5" fill="#101010"/>
<rect x="9" y="18" width="8" height="8" fill="#C8DCF4"/>
<rect x="10.5" y="19.5" width="1" height="5" fill="#5090A0"/><rect x="13" y="19.5" width="1" height="5" fill="#5090A0"/><rect x="15" y="19.5" width="1" height="5" fill="#5090A0"/>
<rect x="1051.5" y="12.5" width="10" height="10" fill="none" stroke="#fff" stroke-width="1"/>
<path d="M1104.5 12.5 L1115 23 M1115 12.5 L1104.5 23" stroke="#fff" stroke-width="1.1"/>
</svg>
</body></html>
